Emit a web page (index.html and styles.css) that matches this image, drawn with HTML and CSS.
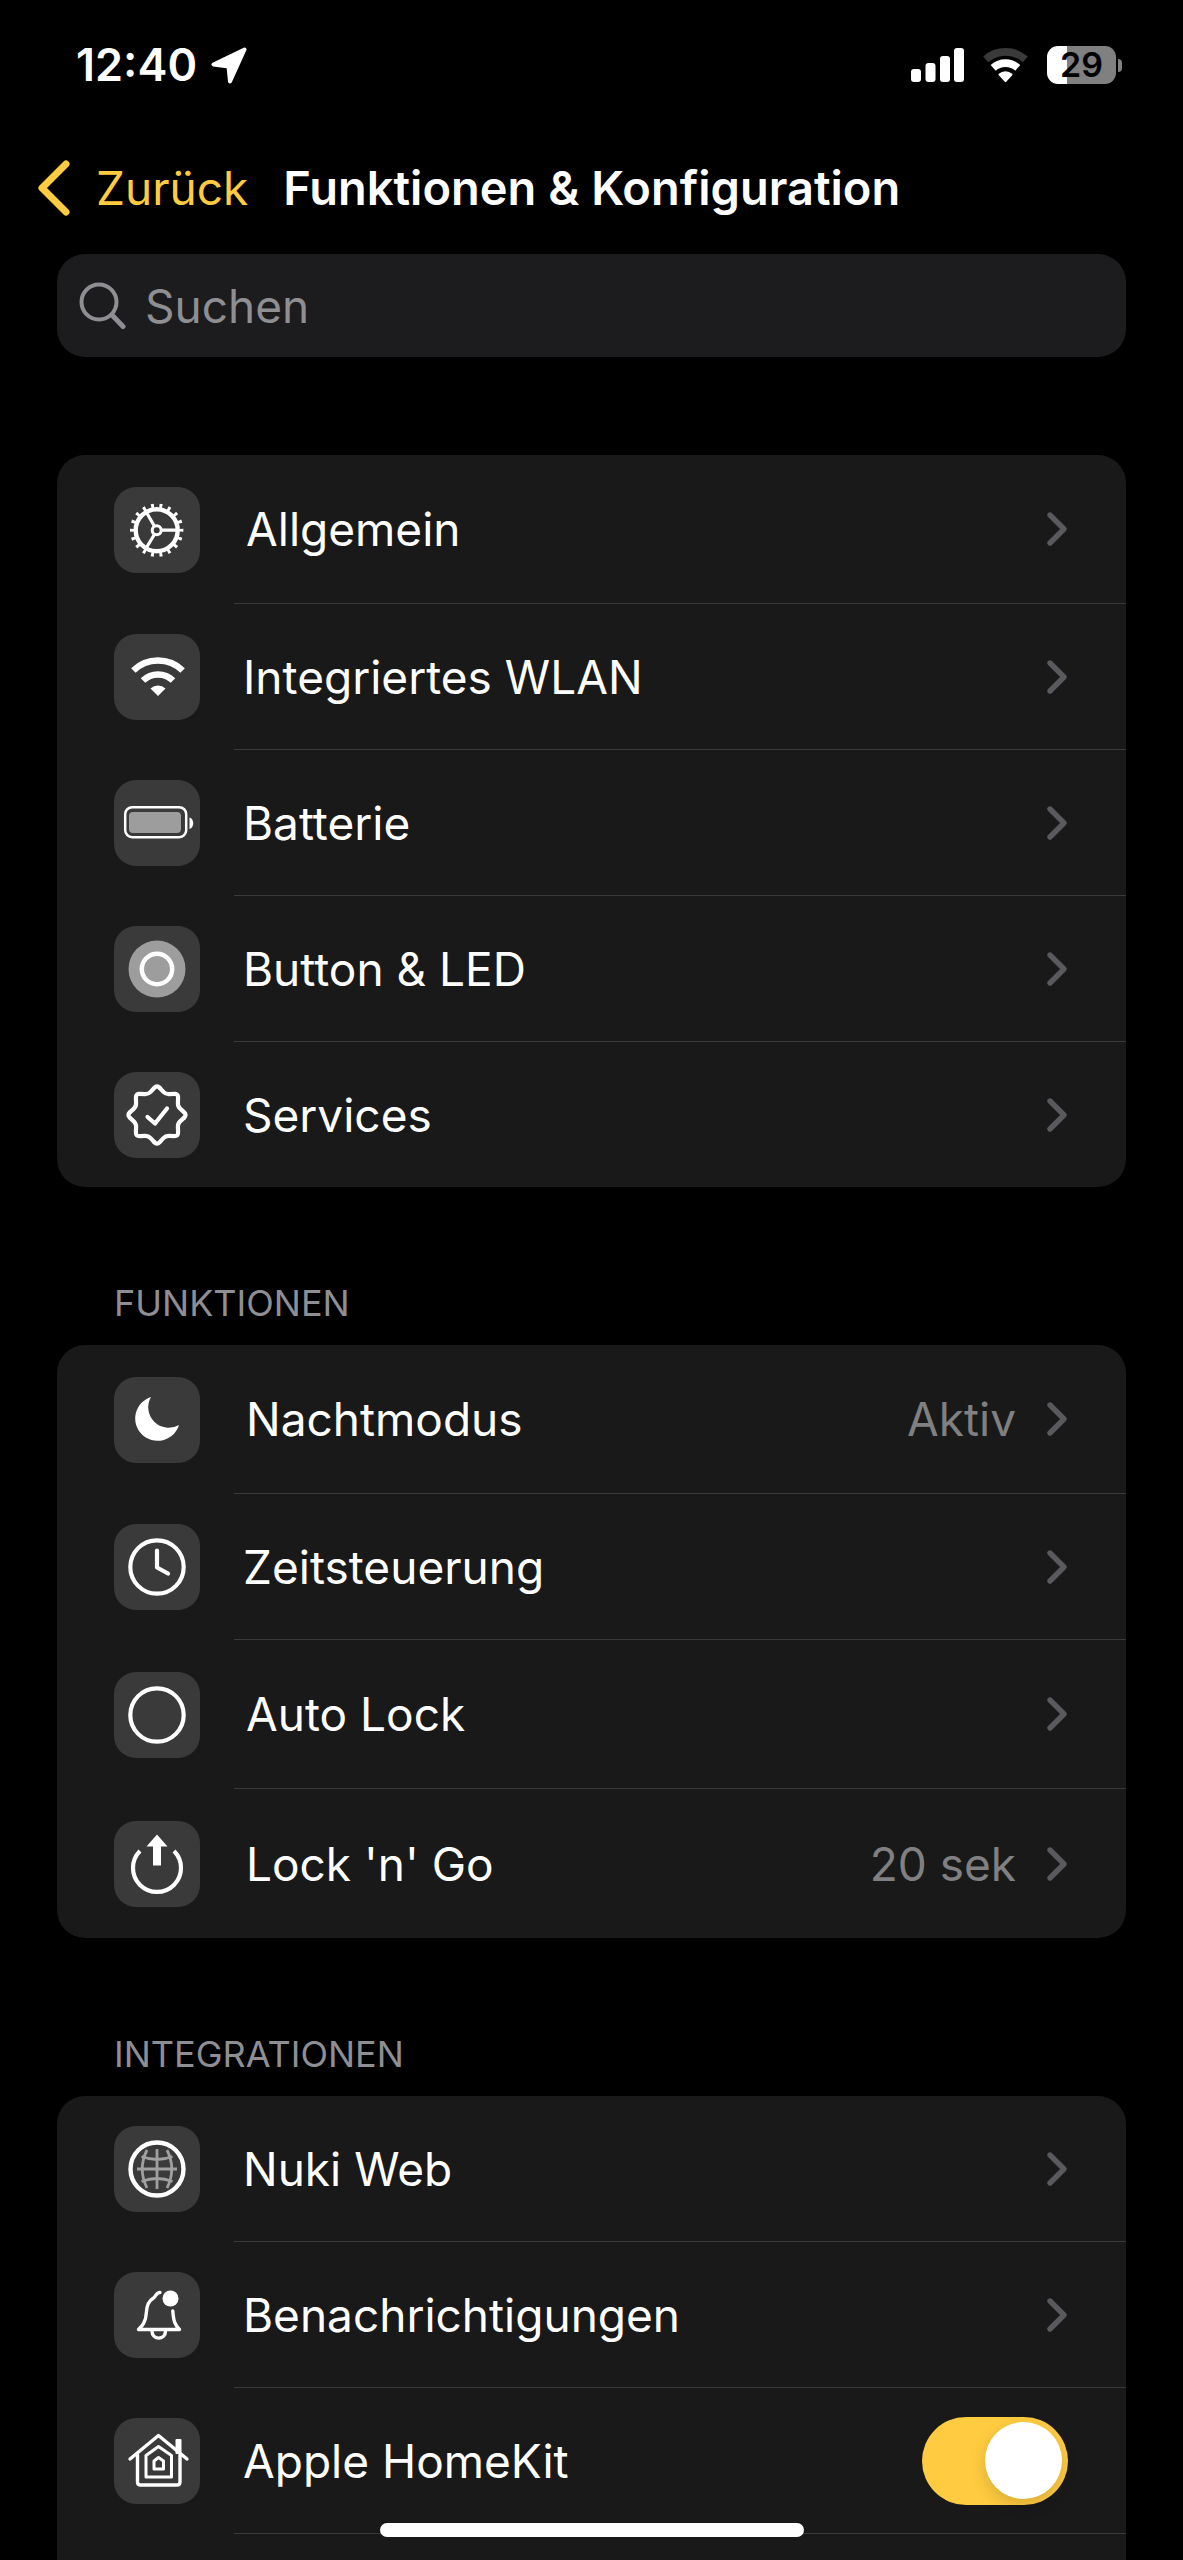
FILE: index.html
```html
<!DOCTYPE html>
<html lang="de">
<head>
<meta charset="utf-8">
<meta name="viewport" content="width=device-width, initial-scale=1">
<title>Funktionen &amp; Konfiguration</title>
<link rel="stylesheet" href="styles.css">
</head>
<body>
<svg class="defs" aria-hidden="true">
  <symbol id="chevron" viewBox="0 0 22 36"><path d="M4 4 L18 18 L4 32" fill="none" stroke="currentColor" stroke-width="5.400" stroke-linecap="round" stroke-linejoin="round"/></symbol>
</svg>
<div class="app">
  <div class="status">
    <div class="status-left">
      <span class="time">12:40</span>
      <svg class="location" viewBox="0 0 36 37" aria-hidden="true"><path d="M33.500 2.500 L2.500 17.500 L17.500 19.500 L19 34.500 Z" fill="#fff" stroke="#fff" stroke-width="4" stroke-linejoin="round"/></svg>
    </div>
    <div class="status-right">
      <svg class="signal" viewBox="0 0 53 36" aria-hidden="true" fill="#fff"><rect x="0" y="22" width="10" height="13" rx="3"/><rect x="14.500" y="16" width="10" height="19" rx="3"/><rect x="29" y="9" width="10" height="26" rx="3"/><rect x="43" y="1" width="10" height="34" rx="3"/></svg>
      <svg class="wifi" viewBox="0 0 45 36" aria-hidden="true" fill="none" stroke-width="7.600"><path d="M2.700 12.300 A30 30 0 0 1 42.300 12.300" stroke="#3a3a3a"/><path d="M10.200 20.800 A18.500 18.500 0 0 1 34.800 20.800" stroke="#fff"/><path d="M22.500 34 L16.500 27.500 A9 9 0 0 1 28.500 27.500 Z" fill="#fff" stroke="#fff" stroke-width="2" stroke-linejoin="round"/></svg>
      <div class="battery"><span class="battery-body">29</span><span class="battery-tip"></span></div>
    </div>
  </div>

  <header class="nav">
    <a class="back" href="#"><svg class="back-icon" viewBox="0 0 33 56" aria-hidden="true"><path d="M29 4 L5 28 L29 52" fill="none" stroke="currentColor" stroke-width="7" stroke-linecap="round" stroke-linejoin="round"/></svg>Zurück</a>
    <h1 class="title">Funktionen &amp; Konfiguration</h1>
  </header>

  <label class="search">
    <svg class="search-icon" viewBox="0 0 48 48" aria-hidden="true"><g fill="none" stroke="#8e8e93" stroke-linecap="round"><circle cx="20" cy="20" r="17.500" stroke-width="4"/><path d="M33 33 L44 44.500" stroke-width="5"/></g></svg>
    <input class="search-input" type="text" placeholder="Suchen" aria-label="Suchen">
  </label>

  <main class="content">
    <ul class="card">
      <li><a class="row row-tall" href="#">
        <svg class="tile" viewBox="0 0 86 86" aria-hidden="true"><g fill="none" stroke="#fff"><circle cx="42.700" cy="43.200" r="21" stroke-width="4.400"/><circle cx="42.700" cy="43.200" r="24.600" stroke-width="4.200" pathLength="180" stroke-dasharray="3.400 6.600" stroke-dashoffset="1.700"/><circle cx="42.700" cy="43.200" r="4.500" stroke-width="3"/><path d="M48 43.200 H63 M40.200 38.700 L32.200 25 M40.200 47.700 L32.200 61" stroke-width="3.200"/></g></svg>
        <span class="row-body"><span class="label">Allgemein</span><svg class="chevron" aria-hidden="true"><use href="#chevron"/></svg></span></a></li>
      <li><a class="row" href="#">
        <svg class="tile" viewBox="0 0 86 86" aria-hidden="true"><g fill="none" stroke="#fff" stroke-width="6.500"><path d="M19.400 36.500 A35.500 35.500 0 0 1 68.600 36.500 M29 46.500 A21.500 21.500 0 0 1 59 46.500"/></g><path d="M44 62 L36.500 54.500 A11 11 0 0 1 51.500 54.500 Z" fill="#fff"/></svg>
        <span class="row-body"><span class="label">Integriertes WLAN</span><svg class="chevron" aria-hidden="true"><use href="#chevron"/></svg></span></a></li>
      <li><a class="row" href="#">
        <svg class="tile" viewBox="0 0 86 86" aria-hidden="true"><rect x="11.200" y="27.200" width="61" height="30" rx="7" fill="none" stroke="#fff" stroke-width="2.500"/><rect x="15" y="32" width="52" height="21" rx="4" fill="#9d9d9d"/><path d="M75.500 37.500 C80.500 39 80.500 47.500 75.500 49 Z" fill="#fff"/></svg>
        <span class="row-body"><span class="label">Batterie</span><svg class="chevron" aria-hidden="true"><use href="#chevron"/></svg></span></a></li>
      <li><a class="row" href="#">
        <svg class="tile" viewBox="0 0 86 86" aria-hidden="true"><circle cx="43" cy="43" r="28.500" fill="#9d9d9d"/><circle cx="43" cy="43" r="15.200" fill="none" stroke="#fff" stroke-width="4.500"/></svg>
        <span class="row-body"><span class="label">Button &amp; LED</span><svg class="chevron" aria-hidden="true"><use href="#chevron"/></svg></span></a></li>
      <li><a class="row" href="#">
        <svg class="tile" viewBox="0 0 86 86" aria-hidden="true"><g fill="none" stroke="#fff" stroke-width="4.200" stroke-linecap="round" stroke-linejoin="round"><path id="lobe" d="M45.600 15.800 L49.400 19.900 Q51.600 22.200 54.800 22.100 L60.400 21.900 Q64.200 21.800 64.100 25.600 L63.900 31.200 Q63.800 34.400 66.100 36.600 L70.200 40.400 Q73 43 70.200 45.600"/><use href="#lobe" transform="rotate(90 43 43)"/><use href="#lobe" transform="rotate(180 43 43)"/><use href="#lobe" transform="rotate(270 43 43)"/><path d="M33.500 45 L41 51.500 L53 36.500"/></g></svg>
        <span class="row-body"><span class="label">Services</span><svg class="chevron" aria-hidden="true"><use href="#chevron"/></svg></span></a></li>
    </ul>

    <h2 class="section">FUNKTIONEN</h2>
    <ul class="card">
      <li><a class="row row-tall" href="#">
        <svg class="tile" viewBox="0 0 86 86" aria-hidden="true"><path d="M37 20 A22.400 22.400 0 1 0 65 48 A20.500 20.500 0 0 1 37 20 Z" fill="#fff"/></svg>
        <span class="row-body"><span class="label">Nachtmodus</span><span class="value">Aktiv</span><svg class="chevron" aria-hidden="true"><use href="#chevron"/></svg></span></a></li>
      <li><a class="row" href="#">
        <svg class="tile" viewBox="0 0 86 86" aria-hidden="true"><g fill="none" stroke="#fff" stroke-linecap="round" stroke-linejoin="round"><circle cx="43" cy="43" r="26.700" stroke-width="4.200"/><path d="M43 26.500 V43.500 L54 49.500" stroke-width="4.200"/></g></svg>
        <span class="row-body"><span class="label">Zeitsteuerung</span><svg class="chevron" aria-hidden="true"><use href="#chevron"/></svg></span></a></li>
      <li><a class="row row-tall" href="#">
        <svg class="tile" viewBox="0 0 86 86" aria-hidden="true"><circle cx="43" cy="43" r="26.700" fill="none" stroke="#fff" stroke-width="4.200"/></svg>
        <span class="row-body"><span class="label">Auto Lock</span><svg class="chevron" aria-hidden="true"><use href="#chevron"/></svg></span></a></li>
      <li><a class="row row-tall" href="#">
        <svg class="tile" viewBox="0 0 86 86" aria-hidden="true"><path d="M26 30 A24 24 0 1 0 60 30" fill="none" stroke="#fff" stroke-width="4.200"/><path d="M43 13.500 L53.500 25.500 H47 V44.500 H39 V25.500 H32.500 Z" fill="#fff"/></svg>
        <span class="row-body"><span class="label">Lock 'n' Go</span><span class="value">20 sek</span><svg class="chevron" aria-hidden="true"><use href="#chevron"/></svg></span></a></li>
    </ul>

    <h2 class="section">INTEGRATIONEN</h2>
    <ul class="card card-last">
      <li><a class="row" href="#">
        <svg class="tile" viewBox="0 0 86 86" aria-hidden="true"><circle cx="43" cy="43" r="26.500" fill="none" stroke="#fff" stroke-width="4.400"/><path d="M43 23 V63 M23 43 H63 M33 24 Q23.500 43 33 62 M53 24 Q62.500 43 53 62 M27.500 30.500 Q43 36.500 58.500 30.500 M27.500 55.500 Q43 49.500 58.500 55.500" fill="none" stroke="#a0a0a0" stroke-width="2.800"/></svg>
        <span class="row-body"><span class="label">Nuki Web</span><svg class="chevron" aria-hidden="true"><use href="#chevron"/></svg></span></a></li>
      <li><a class="row" href="#">
        <svg class="tile" viewBox="0 0 86 86" aria-hidden="true"><g fill="none" stroke="#fff" stroke-width="3.400" stroke-linecap="round" stroke-linejoin="round"><path d="M46 20.500 C42 20.500 42.500 24 39.500 26 C33.500 29.500 32.500 35 32.300 41 C32 50 28 54 24.500 57.500 H65.500 C61 53 59.500 49 58.800 39"/><path d="M38 59 C38 68.500 51.500 68.500 51.500 59"/></g><circle cx="56.500" cy="26.500" r="8" fill="#fff"/></svg>
        <span class="row-body"><span class="label">Benachrichtigungen</span><svg class="chevron" aria-hidden="true"><use href="#chevron"/></svg></span></a></li>
      <li><label class="row">
        <svg class="tile" viewBox="0 0 86 86" aria-hidden="true"><g fill="none" stroke="#fff" stroke-width="3.400" stroke-linecap="round" stroke-linejoin="round"><path d="M16 41 L44.500 17.500 L73 41"/><path d="M23.500 37 V64 Q23.500 67 26.500 67 H63 Q66 67 66 64 V37"/><path d="M32 37.500 L44.500 28.500 L57.500 37.500 V59 H32 Z" stroke-width="3"/><path d="M40 43 L44.500 39.500 L49.500 43 V51 H40 Z" stroke-width="3"/></g><rect x="61.500" y="21" width="6" height="15" rx="1" fill="#fff"/></svg>
        <span class="row-body"><span class="label">Apple HomeKit</span><input class="toggle" type="checkbox" role="switch" checked></span></label></li>
    </ul>
  </main>
  <div class="home-indicator"></div>
</div>
</body>
</html>
```

FILE: styles.css
```css
* { box-sizing: border-box; }

body {
  margin: 0;
  background: #000;
  color: #fff;
  font-family: Inter, "Liberation Sans", sans-serif;
  font-size: 46px;
  line-height: 56px;
}

a { color: inherit; text-decoration: none; }

.defs { position: absolute; width: 0; height: 0; }

.app {
  display: flex;
  flex-direction: column;
  min-height: 100vh;
}

/* Status bar */
.status {
  display: flex;
  justify-content: space-between;
  align-items: center;
  height: 130px;
  padding: 0 61px 0 76px;
}

.status-left { display: flex; align-items: center; gap: 14px; }
.time { font-size: 45px; font-weight: 600; }
.location { width: 36px; height: 37px; }
.status-right { display: flex; align-items: center; gap: 19px; }
.signal { width: 53px; height: 36px; }
.wifi { width: 45px; height: 36px; }
.battery { display: flex; align-items: center; gap: 2px; }

.battery-body {
  width: 69px;
  height: 38px;
  border-radius: 11px;
  background: linear-gradient(to right, #fff 29%, #808080 29%);
  color: #000;
  font-size: 34px;
  font-weight: 600;
  line-height: 38px;
  text-align: center;
}

.battery-tip {
  width: 4px;
  height: 13px;
  border-radius: 0 4px 4px 0;
  background: #808080;
}

/* Navigation */
.nav {
  display: flex;
  align-items: center;
  gap: 35px;
  height: 116px;
  padding: 0 37px;
}

.back {
  display: flex;
  align-items: center;
  gap: 26px;
  color: #ffcb40;
}

.back-icon { width: 33px; height: 56px; }
.title { margin: 0; font-size: 47px; font-weight: 600; }

/* Search */
.search {
  display: flex;
  align-items: center;
  gap: 18px;
  height: 103px;
  margin: 8px 57px 98px;
  padding: 0 22px;
  border-radius: 28px;
  background: #1c1c1e;
}

.search-icon { flex: none; width: 48px; height: 48px; }

.search-input {
  flex: 1;
  min-width: 0;
  padding: 0;
  border: 0;
  outline: 0;
  background: none;
  color: #fff;
  font: inherit;
}

.search-input::placeholder { color: #8e8e93; opacity: 1; }

/* Lists */
.content {
  display: flex;
  flex: 1;
  flex-direction: column;
  padding: 0 57px;
}

.section {
  margin: 94px 0 20px;
  padding-left: 57px;
  color: #8e8e93;
  font-size: 36px;
  font-weight: 400;
  line-height: 44px;
}

.card {
  margin: 0;
  padding: 0;
  border-radius: 28px;
  background: #191919;
  list-style: none;
}

.card-last { flex: 1; border-radius: 28px 28px 0 0; }

.row {
  display: flex;
  align-items: center;
  gap: 34px;
  padding-left: 57px;
}

.tile {
  flex: none;
  width: 86px;
  height: 86px;
  border-radius: 22px;
  background: #3a3a3a;
}

.row-body {
  display: flex;
  flex: 1;
  align-items: center;
  min-height: 146px;
  padding: 0 58px 0 9px;
  border-bottom: 1px solid #3a3a3a;
}

.card:not(.card-last) li:last-child .row-body { min-height: 145px; border-bottom: 0; }

.card .row-tall .row-body,
.card:not(.card-last) li:last-child .row-tall .row-body { min-height: 149px; padding-left: 12px; }

.label { flex: 1; }
.value { margin-right: 30px; color: #808082; }
.chevron { flex: none; width: 22px; height: 36px; color: #5a5a5e; }

.toggle {
  display: flex;
  align-items: center;
  justify-content: flex-end;
  appearance: none;
  width: 146px;
  height: 88px;
  margin: 0;
  padding: 0 6px;
  border-radius: 44px;
  background: #ffcb40;
}

.toggle::before {
  content: "";
  width: 77px;
  height: 77px;
  border-radius: 50%;
  background: #fff;
  box-shadow: 0 6px 16px rgba(0, 0, 0, 0.15);
}

.toggle:not(:checked) { justify-content: flex-start; background: #39393d; }

/* System bar that floats over the scrolling list */
.home-indicator {
  position: fixed;
  bottom: 23px;
  left: 50%;
  width: 424px;
  height: 14px;
  margin-left: -212px;
  border-radius: 7px;
  background: #fff;
}
```
